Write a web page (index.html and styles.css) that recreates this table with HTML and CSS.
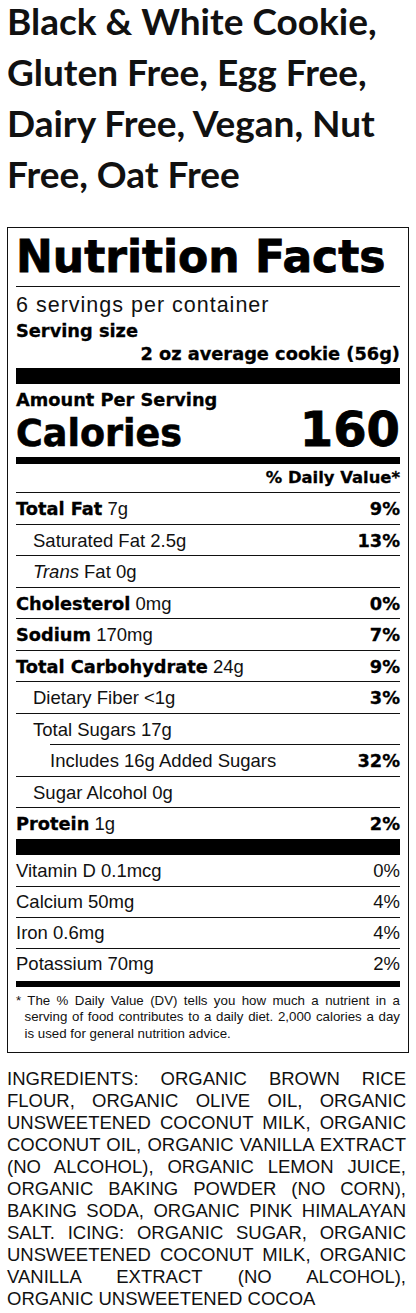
FILE: index.html
```html
<!DOCTYPE html>
<html lang="en">
<head>
    <meta charset="UTF-8">
    <meta name="viewport" content="width=device-width, initial-scale=1.0">
    <title>Black &amp; White Cookie</title>
    <link rel="stylesheet" href="styles.css">
</head>
<body>

    <h1 class="title">Black &amp; White Cookie, Gluten Free, Egg Free, Dairy Free, Vegan, Nut Free, Oat Free</h1>

    <!-- Nutrition label -->
    <div class="label">
        <div class="label-head">Nutrition Facts</div>
        <div class="servings">6 servings per container</div>
        <div class="serving-size">Serving size</div>
        <div class="serving-amount">2 oz average cookie (56g)</div>
        <div class="bar-thick"></div>

        <div class="calories">
            <div class="cal-left">
                <div class="per-serving">Amount Per Serving</div>
                <div class="cal-label">Calories</div>
            </div>
            <div class="cal-value">160</div>
        </div>
        <div class="bar-medium"></div>

        <div class="dv-head">% Daily Value*</div>

        <div class="row"><span><b>Total Fat</b> 7g</span><b>9%</b></div>
        <div class="row sub"><span>Saturated Fat 2.5g</span><b>13%</b></div>
        <div class="row sub"><span><i>Trans</i> Fat 0g</span></div>
        <div class="row"><span><b>Cholesterol</b> 0mg</span><b>0%</b></div>
        <div class="row"><span><b>Sodium</b> 170mg</span><b>7%</b></div>
        <div class="row"><span><b>Total Carbohydrate</b> 24g</span><b>9%</b></div>
        <div class="row sub"><span>Dietary Fiber &lt;1g</span><b>3%</b></div>
        <div class="row sub"><span>Total Sugars 17g</span></div>
        <div class="row added"><span>Includes 16g Added Sugars</span><b>32%</b></div>
        <div class="row sub"><span>Sugar Alcohol 0g</span></div>
        <div class="row"><span><b>Protein</b> 1g</span><b>2%</b></div>
        <div class="bar-thick protein-bar"></div>

        <div class="row vit first"><span>Vitamin D 0.1mcg</span><span>0%</span></div>
        <div class="row vit"><span>Calcium 50mg</span><span>4%</span></div>
        <div class="row vit"><span>Iron 0.6mg</span><span>4%</span></div>
        <div class="row vit"><span>Potassium 70mg</span><span>2%</span></div>
        <div class="bar-medium bottom-bar"></div>

        <p class="footnote">* The % Daily Value (DV) tells you how much a nutrient in a serving of food contributes to a daily diet. 2,000 calories a day is used for general nutrition advice.</p>
    </div>

    <p class="ingredients">INGREDIENTS: ORGANIC BROWN RICE FLOUR, ORGANIC OLIVE OIL, ORGANIC UNSWEETENED COCONUT MILK, ORGANIC COCONUT OIL, ORGANIC VANILLA EXTRACT (NO ALCOHOL), ORGANIC LEMON JUICE, ORGANIC BAKING POWDER (NO CORN), BAKING SODA, ORGANIC PINK HIMALAYAN SALT. ICING: ORGANIC SUGAR, ORGANIC UNSWEETENED COCONUT MILK, ORGANIC VANILLA EXTRACT (NO ALCOHOL), ORGANIC UNSWEETENED COCOA</p>

</body>
</html>
```

FILE: styles.css
```css
body {
    margin: 0;
    padding: 0 7px;
    background: #fff;
    color: #111;
    font-family: "Liberation Sans", Arial, sans-serif;
}

.title {
    font-family: Lato, "Open Sans", sans-serif;
    font-weight: 700;
    font-size: 37px;
    line-height: 51px;
    margin: -5px 0 28px;
    color: #111;
}

/* Label box */
.label {
    border: 1px solid #111;
    padding: 0 8px 10px;
}

.label b,
.label-head,
.serving-size,
.serving-amount,
.per-serving,
.cal-label,
.cal-value,
.dv-head {
    font-family: "DejaVu Sans", sans-serif;
    font-weight: 700;
    -webkit-text-stroke: 0.3px #000;
    color: #000;
}

.label-head {
    font-size: 44px;
    line-height: 58px;
    border-bottom: 1px solid #111;
    -webkit-text-stroke: 0.8px #000;
}

.servings {
    font-size: 21.5px;
    letter-spacing: 1px;
    line-height: 29px;
    padding-top: 4px;
}

.serving-size {
    font-size: 17.8px;
    line-height: 22px;
}

.serving-amount {
    font-size: 17.8px;
    line-height: 24px;
    text-align: right;
}

.bar-thick {
    height: 16px;
    background: #000;
    margin-top: 2px;
}

.calories {
    display: flex;
    justify-content: space-between;
    align-items: flex-end;
}

.per-serving {
    font-size: 17.8px;
    line-height: 20px;
    padding-top: 6px;
}

.cal-label {
    font-size: 36.5px;
    line-height: 47px;
    -webkit-text-stroke: 0.6px #000;
}

.cal-value {
    font-size: 48px;
    line-height: 55px;
    -webkit-text-stroke: 0.8px #000;
}

.bar-medium {
    height: 7px;
    background: #000;
}

.dv-head {
    font-size: 16.4px;
    line-height: 28px;
    text-align: right;
}

/* Nutrient rows */
.row {
    display: flex;
    justify-content: space-between;
    border-top: 1px solid #111;
    padding-top: 1px;
    font-size: 18.5px;
    line-height: 29.5px;
}

.row b {
    font-size: 17.8px;
}

.row.sub {
    padding-left: 17px;
}

.row.added {
    margin-left: 34px;
}

.protein-bar {
    margin-top: 0;
}

.row.vit {
    padding-top: 0;
    line-height: 30px;
}

.row.vit.first {
    border-top: 0;
    line-height: 31px;
}

.bottom-bar {
    height: 6px;
    margin-top: 2px;
}

.footnote {
    margin: 0;
    padding: 6px 0 0 8.5px;
    text-indent: -8.5px;
    font-size: 13.3px;
    line-height: 16.5px;
    text-align: justify;
    color: #111;
}

.ingredients {
    margin: 15px 3px 0 0;
    font-size: 18.5px;
    line-height: 22px;
    text-align: justify;
    color: #111;
}
```
